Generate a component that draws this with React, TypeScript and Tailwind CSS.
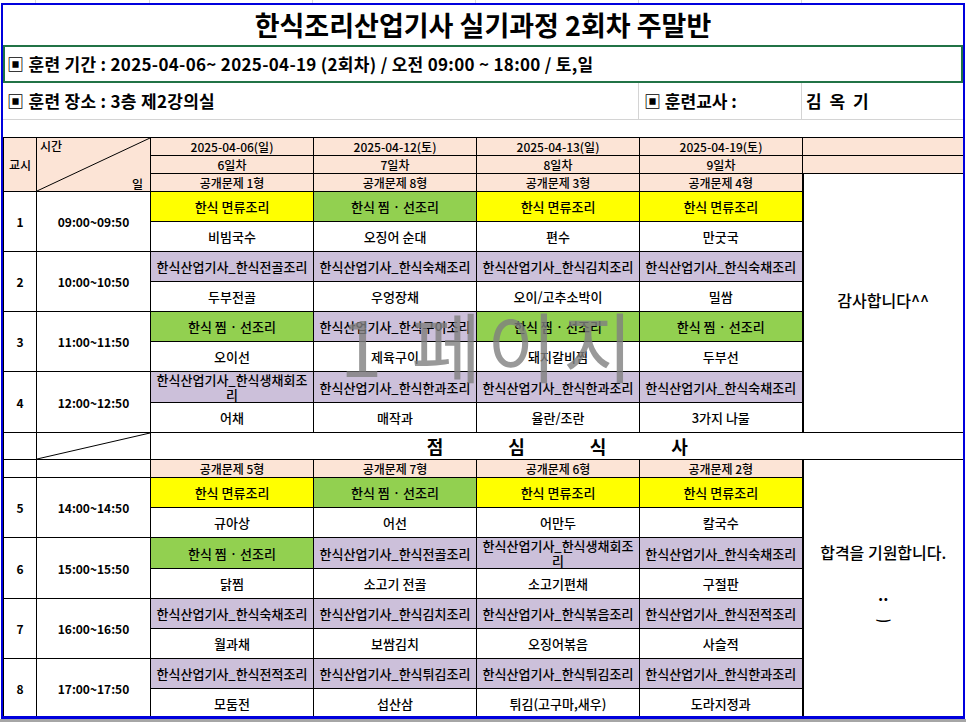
import React from "react";

type Period = {
  no: number;
  time: string;
  cells: [string, string][];
};

const MYEON = "한식 면류조리";
const JJIM = "한식 찜 · 선조리";
const cert = (s: string) => `한식산업기사_한식${s}조리`;

const topDays = [
  { date: "2025-04-06(일)", day: "6일차", test: "공개문제 1형" },
  { date: "2025-04-12(토)", day: "7일차", test: "공개문제 8형" },
  { date: "2025-04-13(일)", day: "8일차", test: "공개문제 3형" },
  { date: "2025-04-19(토)", day: "9일차", test: "공개문제 4형" },
];

const bottomTests = ["공개문제 5형", "공개문제 7형", "공개문제 6형", "공개문제 2형"];

const morning: Period[] = [
  {
    no: 1,
    time: "09:00~09:50",
    cells: [
      [MYEON, "비빔국수"],
      [JJIM, "오징어 순대"],
      [MYEON, "편수"],
      [MYEON, "만굿국"],
    ],
  },
  {
    no: 2,
    time: "10:00~10:50",
    cells: [
      [cert("전골"), "두부전골"],
      [cert("숙채"), "우엉장채"],
      [cert("김치"), "오이/고추소박이"],
      [cert("숙채"), "밀쌈"],
    ],
  },
  {
    no: 3,
    time: "11:00~11:50",
    cells: [
      [JJIM, "오이선"],
      [cert("구이"), "제육구이"],
      [JJIM, "돼지갈비찜"],
      [JJIM, "두부선"],
    ],
  },
  {
    no: 4,
    time: "12:00~12:50",
    cells: [
      [cert("생채회"), "어채"],
      [cert("한과"), "매작과"],
      [cert("한과"), "율란/조란"],
      [cert("숙채"), "3가지 나물"],
    ],
  },
];

const afternoon: Period[] = [
  {
    no: 5,
    time: "14:00~14:50",
    cells: [
      [MYEON, "규아상"],
      [JJIM, "어선"],
      [MYEON, "어만두"],
      [MYEON, "칼국수"],
    ],
  },
  {
    no: 6,
    time: "15:00~15:50",
    cells: [
      [JJIM, "닭찜"],
      [cert("전골"), "소고기 전골"],
      [cert("생채회"), "소고기편채"],
      [cert("숙채"), "구절판"],
    ],
  },
  {
    no: 7,
    time: "16:00~16:50",
    cells: [
      [cert("숙채"), "월과채"],
      [cert("김치"), "보쌈김치"],
      [cert("볶음"), "오징어볶음"],
      [cert("전적"), "사슬적"],
    ],
  },
  {
    no: 8,
    time: "17:00~17:50",
    cells: [
      [cert("전적"), "모둠전"],
      [cert("튀김"), "섭산삼"],
      [cert("튀김"), "튀김(고구마,새우)"],
      [cert("한과"), "도라지정과"],
    ],
  },
];

const subjectBg = (s: string) => {
  if (s === MYEON) return "bg-[#ffff00]";
  if (s === JJIM) return "bg-[#92d050]";
  return "bg-[#ccc0da]";
};

const td = "border border-black p-0 text-center align-middle";
const peach = "bg-[#fce4d6]";

const Diagonal = () => (
  <svg className="absolute inset-0 h-full w-full" preserveAspectRatio="none" viewBox="0 0 100 100">
    <line x1="0" y1="100" x2="100" y2="0" stroke="#000" strokeWidth="1" vectorEffect="non-scaling-stroke" />
  </svg>
);

const PeriodRows = ({ p }: { p: Period }) => (
  <>
    <tr className="h-[30px]">
      <td rowSpan={2} className={`${td} text-[12px] font-bold`}>
        {p.no}
      </td>
      <td rowSpan={2} className={`${td} text-[12px] font-bold`}>
        {p.time}
      </td>
      {p.cells.map(([subject], i) => (
        <td key={i} className={`${td} ${subjectBg(subject)} px-[2px] text-[13px] leading-[15px]`}>
          {subject}
        </td>
      ))}
    </tr>
    <tr className="h-[30px]">
      {p.cells.map(([, dish], i) => (
        <td key={i} className={`${td} bg-white text-[13px]`}>
          {dish}
        </td>
      ))}
    </tr>
  </>
);

export default function App() {
  return (
    <div className="relative h-[722px] w-[966px] overflow-hidden bg-white font-['Noto_Sans_CJK_KR','Noto_Sans',sans-serif] text-black">
      {/* grid lines above the page */}
      <div className="flex h-[3px]">
        <div className="w-[36px] border-r border-[#d9d9d9]" />
        <div className="w-[114px] border-r border-[#d9d9d9]" />
        <div className="w-[163px] border-r border-[#d9d9d9]" />
        <div className="w-[163px] border-r border-[#d9d9d9]" />
        <div className="w-[163px] border-r border-[#d9d9d9]" />
        <div className="w-[163px] border-r border-[#d9d9d9]" />
      </div>

      {/* page */}
      <div className="ml-[1px] flex h-[716px] w-[964px] flex-col overflow-hidden border-x-2 border-t-2 border-b-[3px] border-[#0000dd]">
        <div className="flex h-[40px] shrink-0 items-center justify-center text-[27px] font-bold">
          한식조리산업기사 실기과정 2회차 주말반
        </div>

        <div className="flex h-[38px] shrink-0 items-center border-2 border-[#217346] pl-[2px] text-[17px] font-bold tracking-[0.3px]">
          ▣ 훈련 기간 : 2025-04-06~ 2025-04-19 (2회차) / 오전 09:00 ~ 18:00 / 토,일
        </div>

        <div className="flex h-[37px] shrink-0 border-b border-[#d4d4d4] text-[17px] font-bold">
          <div className="flex w-[636px] items-center border-r border-[#d4d4d4] pl-[4px] tracking-[0.3px]">
            ▣ 훈련 장소 : 3층 제2강의실
          </div>
          <div className="flex w-[163px] items-center border-r border-[#d4d4d4] pl-[5px]">▣ 훈련교사 :</div>
          <div className="flex flex-1 items-center pl-[4px] tracking-[2px]">김 옥 기</div>
        </div>

        <div className="h-[17px] shrink-0" />

        <table className="w-[960px] table-fixed border-collapse text-[12px] font-medium leading-[15px]">
          <colgroup>
            <col className="w-[33px]" />
            <col className="w-[114px]" />
            <col className="w-[163px]" />
            <col className="w-[163px]" />
            <col className="w-[163px]" />
            <col className="w-[163px]" />
            <col className="w-[161px]" />
          </colgroup>
          <tbody>
            <tr className="h-[18px]">
              <td rowSpan={3} className={`${td} ${peach}`}>
                교시
              </td>
              <td rowSpan={3} className={`${td} ${peach} relative`}>
                <Diagonal />
                <span className="absolute left-[3px] top-[0px]">시간</span>
                <span className="absolute bottom-[0px] right-[7px]">일</span>
              </td>
              {topDays.map((d) => (
                <td key={d.date} className={`${td} ${peach}`}>
                  {d.date}
                </td>
              ))}
              <td className={`${td} ${peach}`} />
            </tr>
            <tr className="h-[18px]">
              {topDays.map((d) => (
                <td key={d.day} className={`${td} ${peach}`}>
                  {d.day}
                </td>
              ))}
              <td className={`${td} ${peach}`} />
            </tr>
            <tr className="h-[18px]">
              {topDays.map((d) => (
                <td key={d.test} className={`${td} ${peach}`}>
                  {d.test}
                </td>
              ))}
              <td rowSpan={9} className={`${td} border-l-2 bg-white pb-[6px] text-[16px]`}>
                감사합니다^^
              </td>
            </tr>
            {morning.map((p) => (
              <PeriodRows key={p.no} p={p} />
            ))}

            <tr className="h-[27px]">
              <td className={td} />
              <td className={`${td} relative`}>
                <Diagonal />
              </td>
              <td colSpan={5} className={`${td} border-r-0`}>
                <div className="flex justify-center gap-[65px] text-[18px] font-bold">
                  <span>점</span>
                  <span>심</span>
                  <span>식</span>
                  <span>사</span>
                </div>
              </td>
            </tr>

            <tr className="h-[18px]">
              <td className={td} />
              <td className={td} />
              {bottomTests.map((t) => (
                <td key={t} className={`${td} ${peach}`}>
                  {t}
                </td>
              ))}
              <td rowSpan={9} className={`${td} border-l-2 bg-white pb-[12px] text-[16px] leading-[21px]`}>
                <div>합격을 기원합니다.</div>
                <div className="h-[21px]" />
                <div className="font-bold">..</div>
                <div className="-mt-[2px] font-['DejaVu_Sans',sans-serif] font-bold">‿</div>
              </td>
            </tr>
            {afternoon.map((p) => (
              <PeriodRows key={p.no} p={p} />
            ))}
          </tbody>
        </table>
      </div>
      <div className="h-[3px] bg-[#a6a6a6]" />

      {/* page number watermark */}
      <div className="pointer-events-none absolute left-[340px] top-[306px] text-[76px] leading-none tracking-[6px] text-[#808080] opacity-80">
        1 페이지
      </div>
    </div>
  );
}
